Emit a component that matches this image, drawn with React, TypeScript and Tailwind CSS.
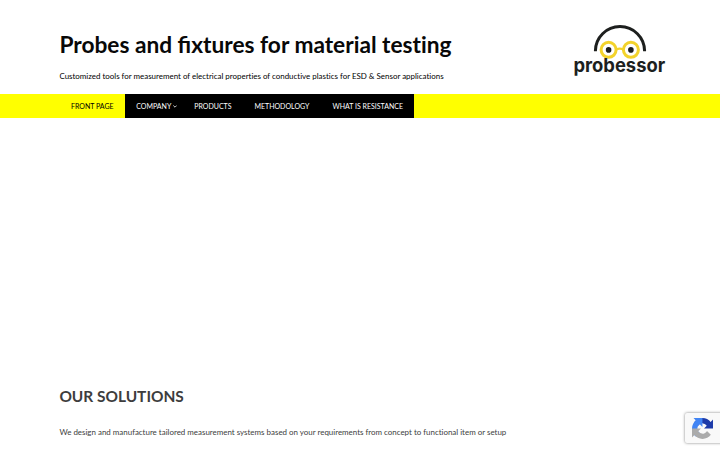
const navLink = 'flex h-full items-center whitespace-nowrap pt-[1px] text-[7px] leading-none text-white';

function Logo() {
  return (
    <svg className="mt-[23px] h-[56px] w-[94px]" viewBox="572 23 94 56" role="img" aria-label="probessor">
      <path d="M595.4 51.2 V51 A24.6 24.5 0 0 1 644.6 51 V51.2" fill="none" stroke="#1d1f1e" strokeWidth="3" />
      <g fill="none" stroke="#f3d32b" strokeWidth="3">
        <circle cx="608.6" cy="49.8" r="7.5" />
        <circle cx="630.9" cy="49.8" r="7.5" />
        <path d="M616 49.3 Q619.8 48 623.5 49.3" strokeWidth="2.4" />
      </g>
      <circle cx="608.6" cy="49.9" r="2.8" fill="#1d1f1e" />
      <circle cx="630.9" cy="49.9" r="2.8" fill="#1d1f1e" />
      <text x="573.4" y="71.8" textLength="91.8" lengthAdjust="spacingAndGlyphs" className="fill-[#1d1f1e] font-['Inter',sans-serif] text-[18.6px] font-bold">probessor</text>
    </svg>
  );
}

function RecaptchaMark() {
  return (
    <svg className="h-[21px] w-[21px]" viewBox="0 0 64 64" aria-hidden="true">
      <path d="M64 31.955l-.033-1.37V4.687l-7.16 7.16C50.948 4.674 42.033.093 32.05.093c-10.4 0-19.622 4.96-25.458 12.64l11.736 11.86a15.55 15.55 0 0 1 4.754-5.334c2.05-1.6 4.952-2.906 8.968-2.906.485 0 .86.057 1.135.163 4.976.393 9.288 3.14 11.828 7.124l-8.307 8.307L64 31.953" fill="#1c3aa9" />
      <path d="M31.862.094l-1.37.033H4.594l7.16 7.16C4.58 13.147 0 22.06 0 32.046c0 10.4 4.96 19.622 12.64 25.458L24.5 45.768a15.55 15.55 0 0 1-5.334-4.754c-1.6-2.05-2.906-4.952-2.906-8.968 0-.485.057-.86.163-1.135.393-4.976 3.14-9.288 7.124-11.828l8.307 8.307L31.86.095" fill="#4285f4" />
      <path d="M.001 32.045l.033 1.37v25.898l7.16-7.16c5.86 7.173 14.774 11.754 24.76 11.754 10.4 0 19.622-4.96 25.458-12.64l-11.736-11.86a15.55 15.55 0 0 1-4.754 5.334c-2.05 1.6-4.952 2.906-8.968 2.906-.485 0-.86-.057-1.135-.163-4.976-.393-9.288-3.14-11.828-7.124l8.307-8.307c-10.522.04-22.4.066-27.295-.005" fill="#ababab" />
    </svg>
  );
}

export default function App() {
  return (
    <div className="relative h-[450px] w-[720px] overflow-hidden bg-white font-['Lato',sans-serif] text-black">
      <header className="flex h-[94px] justify-between pr-[54px] pl-[59.4px]">
        <div className="whitespace-nowrap">
          <h1 className="mt-[30px] w-fit text-[22.7px] leading-[30px] font-bold text-[#080808]">
            Probes and fixtures for material <span className="[font-variant-ligatures:none]">testing</span>
          </h1>
          <p className="mt-[10px] w-fit text-[7.94px] leading-[12px] [font-variant-ligatures:none]">
            Customized tools for measurement of electrical properties of conductive plastics for ESD &amp; Sensor applications
          </p>
        </div>
        <Logo />
      </header>
      <nav className="flex h-[23.5px] bg-[#ffff00] pl-[59px]">
        <a className="flex h-full w-[66px] items-center pt-[1px] pl-[12px] text-[7px] leading-none whitespace-nowrap text-black">FRONT PAGE</a>
        <div className="flex h-full w-[289px] bg-black">
          <a className={navLink + ' w-[58px] gap-[2px] pl-[11.3px]'}>
            COMPANY
            <svg className="h-[3px] w-[4px] shrink-0" viewBox="0 0 4 3"><path d="M.3.5 2 2.2 3.7.5" fill="none" stroke="currentColor" strokeWidth=".8" /></svg>
          </a>
          <a className={navLink + ' w-[60px] pl-[11.3px]'}>PRODUCTS</a>
          <a className={navLink + ' w-[78px] pl-[11.5px]'}>METHODOLOGY</a>
          <a className={navLink + ' w-[93px] pl-[11.5px]'}>WHAT IS RESISTANCE</a>
        </div>
      </nav>
      <main className="pt-[267px] pl-[59.4px] whitespace-nowrap text-[#3d3d3d]">
        <h2 className="w-fit text-[15.45px] leading-[22px] font-bold">OUR SOLUTIONS</h2>
        <p className="mt-[19px] w-fit text-[7.94px] leading-[12px] [font-variant-ligatures:none]">
          We design and manufacture tailored measurement systems based on your requirements from concept to functional item or setup
        </p>
      </main>
      <aside className="absolute top-[413px] left-[685px] flex h-[30px] w-[128px] items-center rounded-[2px] bg-[#f9f9f9] pl-[7px] shadow-[0_0_3px_#808080]">
        <RecaptchaMark />
      </aside>
    </div>
  );
}
